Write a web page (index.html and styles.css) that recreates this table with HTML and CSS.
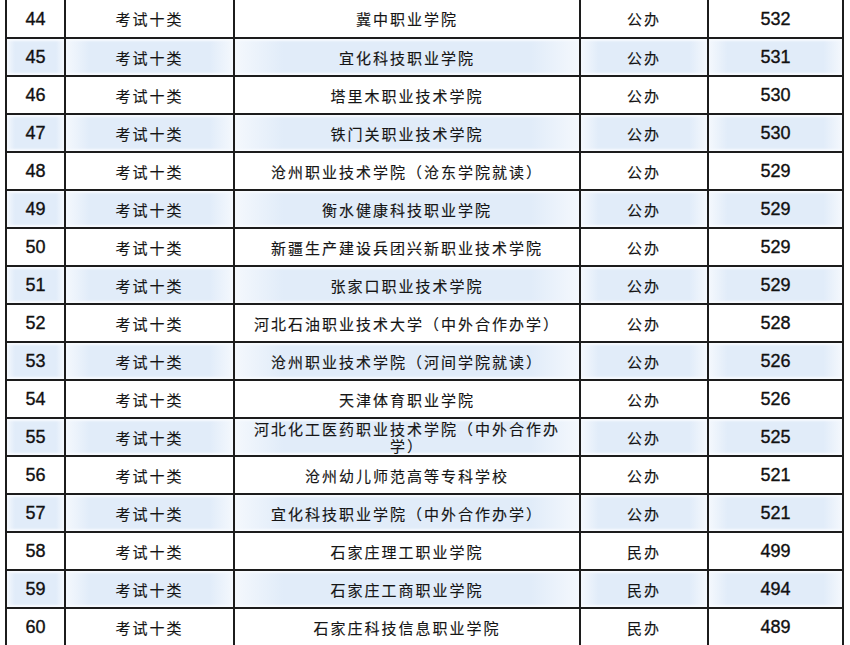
FILE: index.html
```html
<!DOCTYPE html>
<html lang="zh-CN">
<head>
<meta charset="utf-8">
<title>录取分数表</title>
<link rel="stylesheet" href="styles.css">
</head>
<body>
<table class="score-table">
  <colgroup>
    <col class="c-no">
    <col class="c-type">
    <col class="c-name">
    <col class="c-kind">
    <col class="c-score">
  </colgroup>
  <tbody>
    <tr><td class="no">44</td><td class="cn">考试十类</td><td class="cn name">冀中职业学院</td><td class="cn">公办</td><td class="no">532</td></tr>
    <tr class="tint"><td class="no">45</td><td class="cn">考试十类</td><td class="cn name">宜化科技职业学院</td><td class="cn">公办</td><td class="no">531</td></tr>
    <tr><td class="no">46</td><td class="cn">考试十类</td><td class="cn name">塔里木职业技术学院</td><td class="cn">公办</td><td class="no">530</td></tr>
    <tr class="tint"><td class="no">47</td><td class="cn">考试十类</td><td class="cn name">铁门关职业技术学院</td><td class="cn">公办</td><td class="no">530</td></tr>
    <tr><td class="no">48</td><td class="cn">考试十类</td><td class="cn name">沧州职业技术学院（沧东学院就读）</td><td class="cn">公办</td><td class="no">529</td></tr>
    <tr class="tint"><td class="no">49</td><td class="cn">考试十类</td><td class="cn name">衡水健康科技职业学院</td><td class="cn">公办</td><td class="no">529</td></tr>
    <tr><td class="no">50</td><td class="cn">考试十类</td><td class="cn name">新疆生产建设兵团兴新职业技术学院</td><td class="cn">公办</td><td class="no">529</td></tr>
    <tr class="tint"><td class="no">51</td><td class="cn">考试十类</td><td class="cn name">张家口职业技术学院</td><td class="cn">公办</td><td class="no">529</td></tr>
    <tr><td class="no">52</td><td class="cn">考试十类</td><td class="cn name">河北石油职业技术大学（中外合作办学）</td><td class="cn">公办</td><td class="no">528</td></tr>
    <tr class="tint"><td class="no">53</td><td class="cn">考试十类</td><td class="cn name">沧州职业技术学院（河间学院就读）</td><td class="cn">公办</td><td class="no">526</td></tr>
    <tr><td class="no">54</td><td class="cn">考试十类</td><td class="cn name">天津体育职业学院</td><td class="cn">公办</td><td class="no">526</td></tr>
    <tr class="tint"><td class="no">55</td><td class="cn">考试十类</td><td class="cn name wrap"><div class="two-line">河北化工医药职业技术学院（中外合作办学）</div></td><td class="cn">公办</td><td class="no">525</td></tr>
    <tr><td class="no">56</td><td class="cn">考试十类</td><td class="cn name">沧州幼儿师范高等专科学校</td><td class="cn">公办</td><td class="no">521</td></tr>
    <tr class="tint"><td class="no">57</td><td class="cn">考试十类</td><td class="cn name">宜化科技职业学院（中外合作办学）</td><td class="cn">公办</td><td class="no">521</td></tr>
    <tr><td class="no">58</td><td class="cn">考试十类</td><td class="cn name">石家庄理工职业学院</td><td class="cn">民办</td><td class="no">499</td></tr>
    <tr class="tint"><td class="no">59</td><td class="cn">考试十类</td><td class="cn name">石家庄工商职业学院</td><td class="cn">民办</td><td class="no">494</td></tr>
    <tr><td class="no">60</td><td class="cn">考试十类</td><td class="cn name">石家庄科技信息职业学院</td><td class="cn">民办</td><td class="no">489</td></tr>
  </tbody>
</table>
</body>
</html>
```

FILE: styles.css
```css
html, body {
  margin: 0;
  padding: 0;
  background: #ffffff;
}

body {
  width: 850px;
  height: 645px;
  overflow: hidden;
  color: #141414;
}

.score-table {
  margin-left: 5px;
  width: 839px;
  border-collapse: collapse;
  table-layout: fixed;
}

.c-no { width: 59px; }
.c-type { width: 169px; }
.c-name { width: 346px; }
.c-kind { width: 128px; }
.c-score { width: 135px; }

.score-table tr {
  height: 38px;
}

.score-table td {
  border: 2px solid #1c1c1c;
  padding: 0;
  text-align: center;
  vertical-align: middle;
  background: #ffffff;
  overflow: hidden;
}

.score-table tr:first-child td {
  border-top: none;
  height: 36px;
}

.score-table td.no {
  font-family: "Liberation Sans", Arial, sans-serif;
  font-size: 18px;
  color: #111;
  -webkit-text-stroke: 0.35px #111;
  padding-top: 1px;
}

.score-table td.cn {
  font-family: "Noto Sans CJK SC", "Noto Sans", sans-serif;
  font-size: 15px;
  letter-spacing: 2px;
  color: #151515;
  -webkit-text-stroke: 0.15px #151515;
}

.score-table td.name {
  padding: 0 12px;
}

.score-table td.wrap {
  padding: 0 14px;
}

.two-line {
  line-height: 17px;
}

.score-table tr.tint td {
  background: linear-gradient(90deg, #f4f8fd 0%, #e1ecf9 14%, #e1ecf9 86%, #f4f8fd 100%);
  box-shadow: inset 0 3px 2px -1px #f7fafe, inset 0 -3px 2px -1px #f7fafe;
}
```
